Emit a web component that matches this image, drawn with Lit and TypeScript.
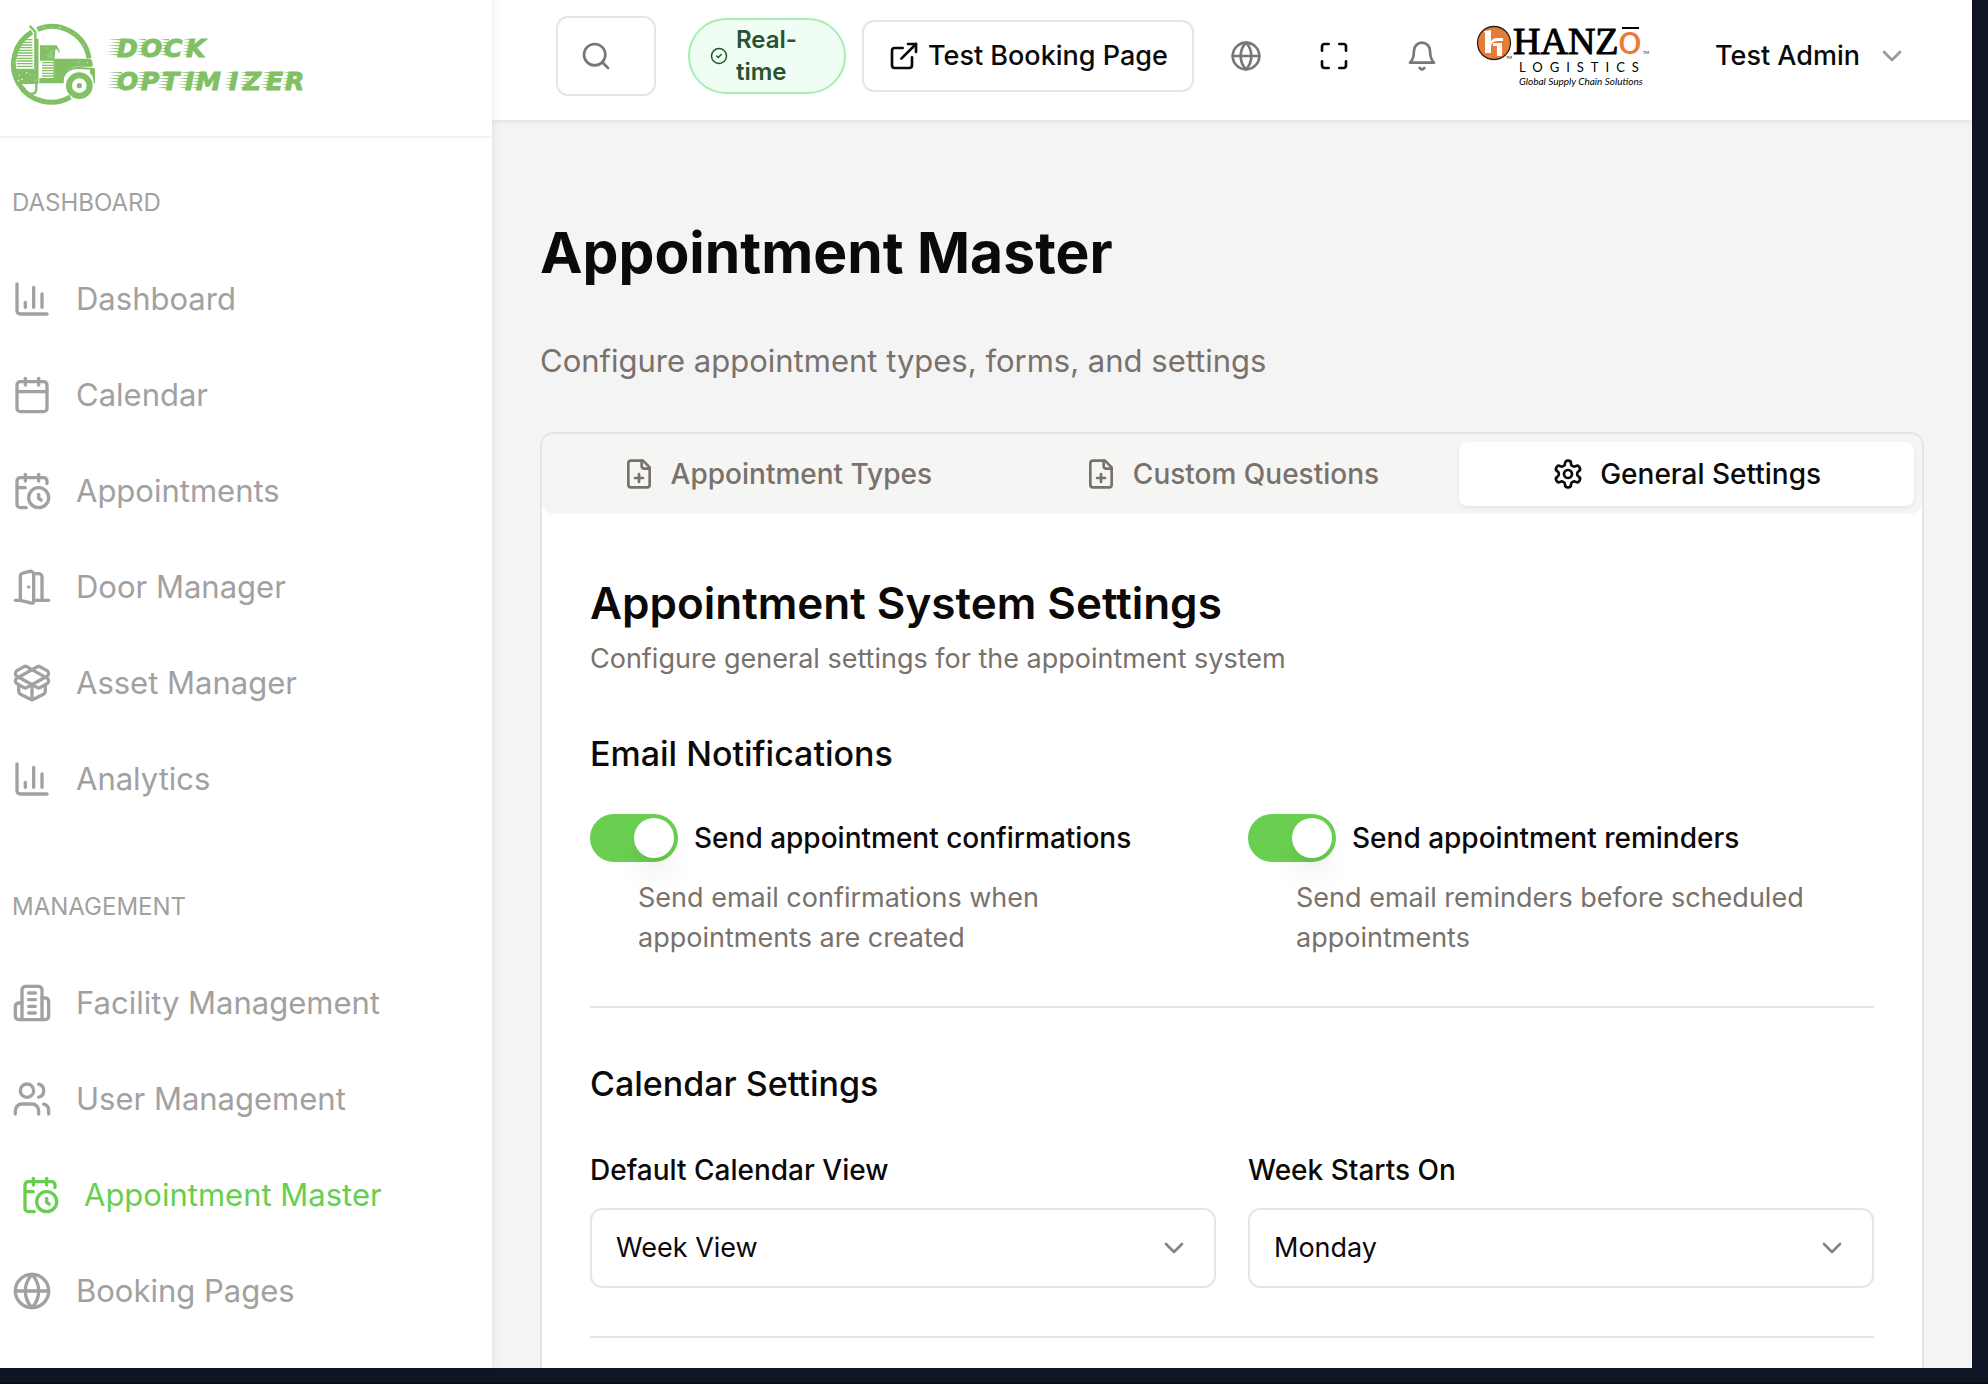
import { LitElement, html, svg, css } from "lit";
import { customElement, property } from "lit/decorators.js";
import { classMap } from "lit/directives/class-map.js";

const icons: Record<string, unknown> = {
  chart: svg`<path d="M3 3v16a2 2 0 0 0 2 2h16"/><path d="M18 17V9"/><path d="M13 17V5"/><path d="M8 17v-3"/>`,
  calendar: svg`<path d="M8 2v4"/><path d="M16 2v4"/><rect width="18" height="18" x="3" y="4" rx="2"/><path d="M3 10h18"/>`,
  calendarClock: svg`<path d="M21 7.5V6a2 2 0 0 0-2-2H5a2 2 0 0 0-2 2v14a2 2 0 0 0 2 2h3.500"/><path d="M16 2v4"/><path d="M8 2v4"/><path d="M3 10h5"/><path d="M17.500 17.500 16 16.300V14"/><circle cx="16" cy="16" r="6"/>`,
  door: svg`<path d="M13 4h3a2 2 0 0 1 2 2v14"/><path d="M2 20h3"/><path d="M13 20h9"/><path d="M10 12v.01"/><path d="M13 4.562v16.157a1 1 0 0 1-1.242.97L5 20V5.562a2 2 0 0 1 1.515-1.940l4-1A2 2 0 0 1 13 4.561Z"/>`,
  box: svg`<path d="M12 22v-9"/><path d="M15.170 2.210a1.670 1.670 0 0 1 1.630 0L21 4.570a1.930 1.930 0 0 1 0 3.360L8.820 14.790a1.655 1.655 0 0 1-1.640 0L3 12.430a1.930 1.930 0 0 1 0-3.360z"/><path d="M20 13v3.870a2.060 2.060 0 0 1-1.110 1.830l-6 3.080a1.930 1.930 0 0 1-1.780 0l-6-3.080A2.060 2.060 0 0 1 4 16.870V13"/><path d="M21 12.430a1.930 1.930 0 0 0 0-3.360L8.830 2.200a1.640 1.640 0 0 0-1.630 0L3 4.570a1.930 1.930 0 0 0 0 3.360l12.180 6.860a1.636 1.636 0 0 0 1.630 0z"/>`,
  building: svg`<path d="M6 22V4a2 2 0 0 1 2-2h8a2 2 0 0 1 2 2v18Z"/><path d="M6 12H4a2 2 0 0 0-2 2v6a2 2 0 0 0 2 2h2"/><path d="M18 9h2a2 2 0 0 1 2 2v9a2 2 0 0 1-2 2h-2"/><path d="M10 6h4"/><path d="M10 10h4"/><path d="M10 14h4"/><path d="M10 18h4"/>`,
  users: svg`<path d="M16 21v-2a4 4 0 0 0-4-4H6a4 4 0 0 0-4 4v2"/><circle cx="9" cy="7" r="4"/><path d="M22 21v-2a4 4 0 0 0-3-3.870"/><path d="M16 3.130a4 4 0 0 1 0 7.750"/>`,
  globe: svg`<circle cx="12" cy="12" r="10"/><path d="M12 2a14.500 14.500 0 0 0 0 20 14.500 14.500 0 0 0 0-20"/><path d="M2 12h20"/>`,
  search: svg`<circle cx="11" cy="11" r="8"/><path d="m21 21-4.300-4.300"/>`,
  check: svg`<circle cx="12" cy="12" r="10"/><path d="m9 12 2 2 4-4"/>`,
  external: svg`<path d="M15 3h6v6"/><path d="M10 14 21 3"/><path d="M18 13v6a2 2 0 0 1-2 2H5a2 2 0 0 1-2-2V8a2 2 0 0 1 2-2h6"/>`,
  maximize: svg`<path d="M8 3H5a2 2 0 0 0-2 2v3"/><path d="M21 8V5a2 2 0 0 0-2-2h-3"/><path d="M3 16v3a2 2 0 0 0 2 2h3"/><path d="M16 21h3a2 2 0 0 0 2-2v-3"/>`,
  bell: svg`<path d="M6 8a6 6 0 0 1 12 0c0 7 3 9 3 9H3s3-2 3-9"/><path d="M10.300 21a1.940 1.940 0 0 0 3.400 0"/>`,
  chevron: svg`<path d="m6 9 6 6 6-6"/>`,
  filePlus: svg`<path d="M15 2H6a2 2 0 0 0-2 2v16a2 2 0 0 0 2 2h12a2 2 0 0 0 2-2V7Z"/><path d="M14 2v4a2 2 0 0 0 2 2h4"/><path d="M9 15h6"/><path d="M12 18v-6"/>`,
  settings: svg`<path d="M12.220 2h-.44a2 2 0 0 0-2 2v.18a2 2 0 0 1-1 1.730l-.43.25a2 2 0 0 1-2 0l-.15-.08a2 2 0 0 0-2.730.73l-.22.38a2 2 0 0 0 .73 2.730l.15.1a2 2 0 0 1 1 1.720v.51a2 2 0 0 1-1 1.740l-.15.09a2 2 0 0 0-.73 2.730l.22.38a2 2 0 0 0 2.730.73l.15-.08a2 2 0 0 1 2 0l.43.25a2 2 0 0 1 1 1.730V20a2 2 0 0 0 2 2h.44a2 2 0 0 0 2-2v-.18a2 2 0 0 1 1-1.730l.43-.25a2 2 0 0 1 2 0l.15.08a2 2 0 0 0 2.730-.73l.22-.39a2 2 0 0 0-.73-2.730l-.15-.08a2 2 0 0 1-1-1.740v-.5a2 2 0 0 1 1-1.740l.15-.09a2 2 0 0 0 .73-2.730l-.22-.38a2 2 0 0 0-2.730-.73l-.15.08a2 2 0 0 1-2 0l-.43-.25a2 2 0 0 1-1-1.730V4a2 2 0 0 0-2-2z"/><circle cx="12" cy="12" r="3"/>`,
};

@customElement("ui-icon")
class UiIcon extends LitElement {
  @property() name = "";
  static styles = css`
    :host { display: block; flex: none; width: 32px; height: 32px; }
    .glyph { display: block; width: 100%; height: 100%; }
  `;
  render() {
    return html`<svg class="glyph" viewBox="0 0 24 24" fill="none" stroke="currentColor" stroke-width="2"
      stroke-linecap="round" stroke-linejoin="round" aria-hidden="true">${icons[this.name]}</svg>`;
  }
}

// Tapering speed lines that trail each letter of the wordmark.
const streaks = (right: number, top: number, length: number) =>
  [1, 4, 7, 10, 13, 16].map((dy, i) => {
    const end = right + 4 - i / 2;
    const start = end - length + (i % 2) * 2;
    return svg`<path d="M${start} ${top + dy + 0.6}L${end} ${top + dy}V${top + dy + 1.4}Z"/>`;
  });

@customElement("dock-logo")
class DockLogo extends LitElement {
  static styles = css`
    :host { display: block; }
    .logo { display: block; width: 304px; height: 84px; }
    .word {
      font: italic 700 25px "DejaVu Sans", sans-serif;
      stroke: #82c065;
      stroke-width: 1px;
    }
  `;
  render() {
    return html`<svg class="logo" viewBox="10 22 304 84" fill="#82c065" role="img" aria-label="Dock Optimizer">
      <g transform="scale(.33333)">
        <g fill="none" stroke="#82c065">
          <path stroke-width="15" d="M112 88A113 113 0 0 1 267 175"/>
          <path stroke-width="15" d="M211 291A113 113 0 0 1 96 96"/>
          <path stroke-width="7" d="M89 77 106 96V118"/>
          <path stroke-width="13" d="M109 116V252"/>
          <path stroke-width="7" d="M109 250V266Q109 281 96 281H73"/>
          <path stroke-width="4" d="M78 119H97M68 127H97M62 135H97M58 143H97M54 151H98M50 159H98M50 167H98M50 175H98M50 183H98M50 191H98M50 199H98"/>
          <path stroke-width="4" d="M126 188H161M126 196H161M126 204H161M126 212H161M126 220H161M126 228H161"/>
          <path stroke-width="4" d="M162 180V236"/>
          <path stroke-width="6" d="M188 249C187 216 210 203 238 204L283 207"/>
        </g>
        <path d="M46 206H103V252H64L78 266 64 274Q48 248 44 214Z"/>
        <path d="M120 136H170L178 150 179 162 171 148H166L164 176H270Q279 178 278 200H226Q196 204 190 232V250H118V234H163V182H120Z"/>
        <path d="M270 206H285V250H281Q280 226 270 220Z"/>
        <path fill="#fff" d="M140 176V162Q150 158 152 150H158V176Z" opacity=".15"/>
        <circle cx="238" cy="257" r="31" fill="#fff" stroke="#82c065" stroke-width="18"/>
        <circle cx="238" cy="257" r="8"/>
        <g fill="#fff">
          <circle cx="66" cy="238" r="2.500"/><circle cx="58" cy="226" r="2"/><circle cx="80" cy="218" r="2"/>
          <circle cx="55" cy="242" r="2"/><circle cx="92" cy="224" r="1.500"/><circle cx="130" cy="82" r="1.500"/>
          <circle cx="180" cy="82" r="2"/><circle cx="222" cy="100" r="1.500"/><circle cx="252" cy="135" r="1.500"/>
          <circle cx="236" cy="186" r="1.500"/><circle cx="262" cy="188" r="1.500"/><circle cx="140" cy="144" r="1.500"/>
          <circle cx="46" cy="186" r="1.500"/><circle cx="74" cy="286" r="1.500"/><circle cx="108" cy="240" r="1.500"/>
        </g>
      </g>
      ${streaks(118, 38, 14)}${streaks(142, 38, 9)}${streaks(165, 38, 9)}${streaks(188, 38, 9)}
      ${streaks(118, 71, 14)}${streaks(142, 71, 9)}${streaks(166, 71, 12)}${streaks(187, 71, 12)}
      ${streaks(197, 71, 9)}${streaks(231, 71, 9)}${streaks(246, 71, 10)}${streaks(267, 71, 9)}${streaks(288, 71, 9)}
      <text class="word" y="57" x="117 141 164 186">DOCK</text>
      <text class="word" y="90" x="117 141 162 185 196 229 243 266 285">OPTIMIZER</text>
    </svg>`;
  }
}

@customElement("hanzo-logo")
class HanzoLogo extends LitElement {
  static styles = css`
    :host { display: block; }
    .logo { display: block; width: 176px; height: 92px; }
    .name { font: 400 38px "Liberation Serif", serif; stroke: #000; stroke-width: 1px; }
    .round { font: 400 42px Lato, sans-serif; }
    .sub { font: 400 13px Lato, sans-serif; letter-spacing: 7px; }
    .line { font: italic 400 10px Lato, sans-serif; }
    .tm { font: 400 4px Lato, sans-serif; }
  `;
  render() {
    return html`<svg class="logo" viewBox="1476 10 176 92" role="img" aria-label="Hanzo Logistics">
      <circle cx="1494" cy="43" r="16.500" fill="#e87b35" stroke="#222" stroke-width="1.300"/>
      <path fill="#fff" d="M1484 31 1491 30V41Q1493 38 1497 38H1503V41H1496Q1491 42 1491 47V53H1485V33ZM1493 43H1502V56H1497V46H1493Z"/>
      <text class="name" x="1513" y="54">HANZ</text>
      <text class="round" x="1618" y="54" fill="#e87b35">o</text>
      <rect x="1622" y="27" width="17" height="2"/>
      <text class="tm" x="1506" y="59">TM</text>
      <text class="tm" x="1643" y="54">TM</text>
      <text class="sub" x="1519" y="72">LOGISTICS</text>
      <text class="line" x="1519" y="85">Global Supply Chain Solutions</text>
    </svg>`;
  }
}

const sections = [
  {
    title: "DASHBOARD",
    items: [
      ["chart", "Dashboard"],
      ["calendar", "Calendar"],
      ["calendarClock", "Appointments"],
      ["door", "Door Manager"],
      ["box", "Asset Manager"],
      ["chart", "Analytics"],
    ],
  },
  {
    title: "MANAGEMENT",
    items: [
      ["building", "Facility Management"],
      ["users", "User Management"],
      ["calendarClock", "Appointment Master"],
      ["globe", "Booking Pages"],
    ],
  },
];

const tabs = [
  ["filePlus", "Appointment Types"],
  ["filePlus", "Custom Questions"],
  ["settings", "General Settings"],
];

const toggles = [
  ["confirmations", "Send appointment confirmations", "Send email confirmations when appointments are created"],
  ["reminders", "Send appointment reminders", "Send email reminders before scheduled appointments"],
];

const selects = [
  ["view", "Default Calendar View", "Week View"],
  ["start", "Week Starts On", "Monday"],
];

@customElement("app-root")
class AppRoot extends LitElement {
  static styles = css`
    :host {
      display: flex;
      box-sizing: border-box;
      height: 100vh;
      padding: 0 16px 14px 0;
      border-bottom: 2px solid #080c18;
      overflow: hidden;
      background: #0f1524;
      color: #0c0a09;
      font-family: Inter, "Liberation Sans", sans-serif;
      font-size: 27px;
      line-height: 40px;
    }
    * { box-sizing: border-box; }
    h1, h2, h3, p { margin: 0; }
    button, input, select { font: inherit; color: inherit; }
    button { border: 0; background: none; padding: 0; }

    .sidebar {
      flex: none;
      width: 492px;
      background: #fff;
      box-shadow: 0 0 8px rgba(0, 0, 0, 0.1);
      overflow: hidden;
      z-index: 1;
    }
    .brand { padding: 22px 10px 30px; border-bottom: 2px solid #f3f3f3; }
    .section { padding-top: 49px; color: #a1a1a1; }
    .section + .section { padding-top: 64px; }
    .caption { margin: 0 12px 32px; font-size: 24px; line-height: 32px; font-weight: 400; }
    .link {
      display: flex;
      align-items: center;
      gap: 24px;
      height: 96px;
      padding: 0 12px;
      font-size: 31px;
      color: inherit;
      text-decoration: none;
    }
    .link ui-icon { width: 40px; height: 40px; }
    .link.active { padding-left: 20px; color: #67cf4f; }

    .page { flex: 1; min-width: 0; display: flex; flex-direction: column; background: #f4f4f4; }
    .topbar {
      flex: none;
      display: flex;
      align-items: center;
      height: 120px;
      padding: 0 64px 8px;
      background: #fff;
      box-shadow: 0 1px 6px rgba(0, 0, 0, 0.1);
      font-weight: 500;
    }
    .search {
      display: flex;
      align-items: center;
      width: 100px;
      height: 80px;
      padding: 0 22px;
      border: 2px solid #e5e5e5;
      border-radius: 12px;
      color: #777;
    }
    .search input { flex: 1; min-width: 0; width: 0; border: 0; padding: 0; outline: 0; background: none; }
    .pill {
      display: flex;
      align-items: center;
      gap: 8px;
      width: 158px;
      height: 76px;
      margin: 0 16px 0 32px;
      padding: 0 20px;
      border: 2px solid #a3efb3;
      border-radius: 38px;
      background: #f0fdf4;
      color: #27532f;
      font-size: 24px;
      line-height: 32px;
      font-weight: 600;
    }
    .pill ui-icon { width: 18px; height: 18px; }
    .outline {
      display: flex;
      align-items: center;
      gap: 8px;
      height: 72px;
      padding: 0 24px;
      border: 2px solid #e5e5e5;
      border-radius: 12px;
      background: #fff;
      white-space: nowrap;
    }
    .tools { display: flex; margin: 0 10px 0 8px; }
    .tool { display: flex; align-items: center; justify-content: center; width: 88px; height: 72px; color: #777; }
    .tool.dark { color: #0c0a09; }
    .user { display: flex; align-items: center; gap: 16px; margin-left: auto; white-space: nowrap; }
    .user ui-icon { color: #999; }

    .content { flex: 1; min-height: 0; overflow: hidden; padding: 97px 48px 0; }
    .title { font-size: 57px; line-height: 72px; font-weight: 700; }
    .lead { margin: 48px 0 47px; font-size: 31px; line-height: 48px; color: #79716b; }
    .card { border: 2px solid #e4e4e3; border-radius: 14px; background: #fff; padding-bottom: 96px; }
    .tabs {
      display: grid;
      grid-template-columns: repeat(3, 1fr);
      height: 80px;
      padding: 8px;
      border-radius: 12px;
      background: #f5f5f4;
    }
    .tab {
      display: flex;
      align-items: center;
      justify-content: center;
      gap: 16px;
      border-radius: 8px;
      font-size: 28px;
      font-weight: 500;
      color: #79716b;
    }
    .tab.active { background: #fff; color: #0c0a09; box-shadow: 0 2px 4px rgba(0, 0, 0, 0.07); }
    .panel { padding: 64px 48px 0; }
    .heading { font-size: 44px; line-height: 50px; font-weight: 600; }
    .desc { margin: 11px 0 47px; color: #79716b; }
    .group { font-size: 34px; line-height: 56px; font-weight: 500; }
    .pair { display: grid; grid-template-columns: 1fr 1fr; gap: 32px; margin-top: 32px; }
    .toggle { display: flex; align-items: center; gap: 16px; height: 48px; }
    .switch {
      appearance: none;
      flex: none;
      display: flex;
      justify-content: flex-start;
      width: 88px;
      height: 48px;
      margin: 0;
      padding: 4px;
      border-radius: 24px;
      background: #d6d3d1;
    }
    .switch:checked { background: #6acf51; justify-content: flex-end; }
    .switch::before {
      content: "";
      width: 40px;
      height: 40px;
      border-radius: 20px;
      background: #fff;
      box-shadow: 0 20px 30px -6px rgba(0, 0, 0, 0.1), 0 8px 12px -8px rgba(0, 0, 0, 0.1);
    }
    .label { font-size: 28px; font-weight: 500; }
    .help { margin: 16px 0 0 48px; color: #79716b; }
    .rule { height: 2px; margin: 48px 0; border: 0; background: #e5e5e5; }
    .fields { margin-top: 40px; }
    .field { display: grid; gap: 20px; }
    .field .label { line-height: 36px; }
    .select { display: grid; align-items: center; }
    .select select, .select ui-icon { grid-area: 1 / 1; }
    .select select {
      appearance: none;
      width: 100%;
      height: 80px;
      padding: 0 24px;
      border: 2px solid #e5e5e5;
      border-radius: 12px;
      background: #fff;
    }
    .select ui-icon { justify-self: end; margin-right: 26px; color: #868584; pointer-events: none; }
  `;

  render() {
    return html`
      <aside class="sidebar">
        <div class="brand"><dock-logo></dock-logo></div>
        <nav>
          ${sections.map(
            (s) => html`<section class="section">
              <h2 class="caption">${s.title}</h2>
              ${s.items.map(
                ([icon, text]) => html`<a href="#" class=${classMap({ link: true, active: text === "Appointment Master" })}>
                  <ui-icon name=${icon}></ui-icon><span>${text}</span></a>`
              )}
            </section>`
          )}
        </nav>
      </aside>
      <div class="page">
        <header class="topbar">
          <label class="search"><ui-icon name="search"></ui-icon><input type="search" aria-label="Search" /></label>
          <div class="pill"><ui-icon name="check"></ui-icon><span>Real-time</span></div>
          <button class="outline"><ui-icon name="external"></ui-icon>Test Booking Page</button>
          <div class="tools">
            <button class="tool" aria-label="Language"><ui-icon name="globe"></ui-icon></button>
            <button class="tool dark" aria-label="Full screen"><ui-icon name="maximize"></ui-icon></button>
            <button class="tool" aria-label="Notifications"><ui-icon name="bell"></ui-icon></button>
          </div>
          <hanzo-logo></hanzo-logo>
          <button class="user">Test Admin<ui-icon name="chevron"></ui-icon></button>
        </header>
        <main class="content">
          <h1 class="title">Appointment Master</h1>
          <p class="lead">Configure appointment types, forms, and settings</p>
          <div class="card">
            <div class="tabs" role="tablist">
              ${tabs.map(
                ([icon, text], i) => html`<button role="tab" aria-selected=${i === 2} class=${classMap({ tab: true, active: i === 2 })}>
                  <ui-icon name=${icon}></ui-icon>${text}</button>`
              )}
            </div>
            <div class="panel" role="tabpanel">
              <h2 class="heading">Appointment System Settings</h2>
              <p class="desc">Configure general settings for the appointment system</p>
              <h3 class="group">Email Notifications</h3>
              <div class="pair">
                ${toggles.map(
                  ([id, text, help]) => html`<div>
                    <div class="toggle">
                      <input class="switch" type="checkbox" role="switch" id=${id} checked />
                      <label class="label" for=${id}>${text}</label>
                    </div>
                    <p class="help">${help}</p>
                  </div>`
                )}
              </div>
              <hr class="rule" />
              <h3 class="group">Calendar Settings</h3>
              <div class="pair fields">
                ${selects.map(
                  ([id, text, value]) => html`<div class="field">
                    <label class="label" for=${id}>${text}</label>
                    <div class="select">
                      <select id=${id}><option>${value}</option></select>
                      <ui-icon name="chevron"></ui-icon>
                    </div>
                  </div>`
                )}
              </div>
              <hr class="rule" />
            </div>
          </div>
        </main>
      </div>
    `;
  }
}
